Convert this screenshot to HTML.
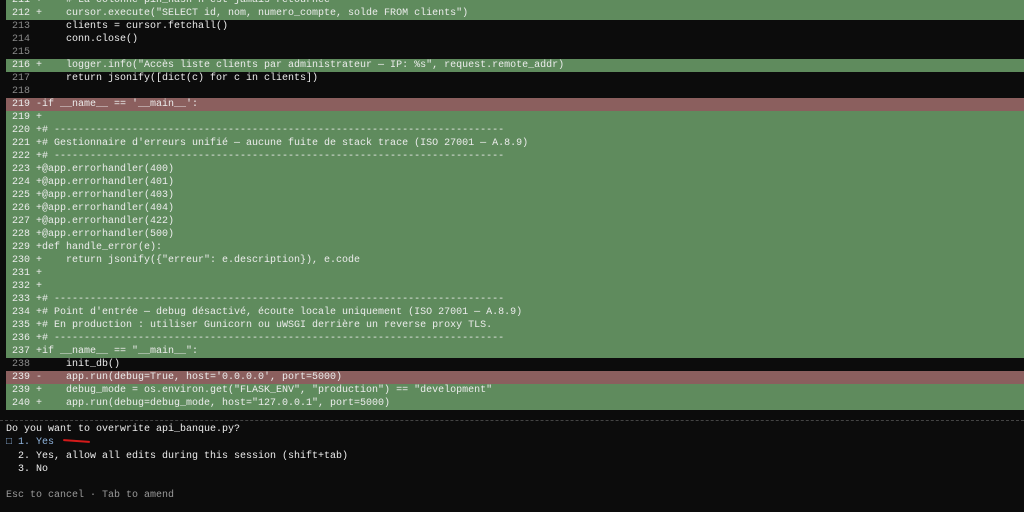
<!DOCTYPE html>
<html><head><meta charset="utf-8"><style>
html,body{margin:0;padding:0;background:#0c0c0c;width:1024px;height:512px;overflow:hidden}
body{font-family:"Liberation Mono",monospace;font-size:10px;color:#ececec;position:relative}
#diff{position:absolute;left:6px;right:0;top:-6.5px;display:grid;grid-auto-rows:13px}
.r{height:13px;line-height:13px;white-space:pre;padding-left:6px;overflow:hidden}
.a{background:#5f8b5d}
.d{background:#8b5f5e}
.c .n{color:#8a8a8a}
.bot{position:absolute;left:6px;white-space:pre;line-height:13px}
.sep{position:absolute;left:0;right:0;top:420px;border-top:1px dashed #444}
</style></head><body>
<div id="diff">
<div class="r a">211 +    # La colonne pin_hash n'est jamais retournée</div>
<div class="r a">212 +    cursor.execute("SELECT id, nom, numero_compte, solde FROM clients")</div>
<div class="r c"><span class="n">213</span>      clients = cursor.fetchall()</div>
<div class="r c"><span class="n">214</span>      conn.close()</div>
<div class="r c"><span class="n">215</span></div>
<div class="r a">216 +    logger.info("Accès liste clients par administrateur — IP: %s", request.remote_addr)</div>
<div class="r c"><span class="n">217</span>      return jsonify([dict(c) for c in clients])</div>
<div class="r c"><span class="n">218</span></div>
<div class="r d">219 -if __name__ == '__main__':</div>
<div class="r a">219 +</div>
<div class="r a">220 +# ---------------------------------------------------------------------------</div>
<div class="r a">221 +# Gestionnaire d'erreurs unifié — aucune fuite de stack trace (ISO 27001 — A.8.9)</div>
<div class="r a">222 +# ---------------------------------------------------------------------------</div>
<div class="r a">223 +@app.errorhandler(400)</div>
<div class="r a">224 +@app.errorhandler(401)</div>
<div class="r a">225 +@app.errorhandler(403)</div>
<div class="r a">226 +@app.errorhandler(404)</div>
<div class="r a">227 +@app.errorhandler(422)</div>
<div class="r a">228 +@app.errorhandler(500)</div>
<div class="r a">229 +def handle_error(e):</div>
<div class="r a">230 +    return jsonify({"erreur": e.description}), e.code</div>
<div class="r a">231 +</div>
<div class="r a">232 +</div>
<div class="r a">233 +# ---------------------------------------------------------------------------</div>
<div class="r a">234 +# Point d'entrée — debug désactivé, écoute locale uniquement (ISO 27001 — A.8.9)</div>
<div class="r a">235 +# En production : utiliser Gunicorn ou uWSGI derrière un reverse proxy TLS.</div>
<div class="r a">236 +# ---------------------------------------------------------------------------</div>
<div class="r a">237 +if __name__ == "__main__":</div>
<div class="r c"><span class="n">238</span>      init_db()</div>
<div class="r d">239 -    app.run(debug=True, host='0.0.0.0', port=5000)</div>
<div class="r a">239 +    debug_mode = os.environ.get("FLASK_ENV", "production") == "development"</div>
<div class="r a">240 +    app.run(debug=debug_mode, host="127.0.0.1", port=5000)</div>
</div>
<div class="sep"></div>
<div class="bot" style="top:423px">Do you want to overwrite api_banque.py?</div>
<div class="bot" style="top:436px;color:#8fb3dc">&#9633; 1. Yes</div>
<div style="position:absolute;left:63px;top:440px;width:27px;height:2px;background:#d41a1a;border-radius:1px;transform:rotate(4deg)"></div>
<div class="bot" style="top:450px">  2. Yes, allow all edits during this session (shift+tab)</div>
<div class="bot" style="top:463px">  3. No</div>
<div class="bot" style="top:489px;color:#9a9a9a">Esc to cancel · Tab to amend</div>
</body></html>
